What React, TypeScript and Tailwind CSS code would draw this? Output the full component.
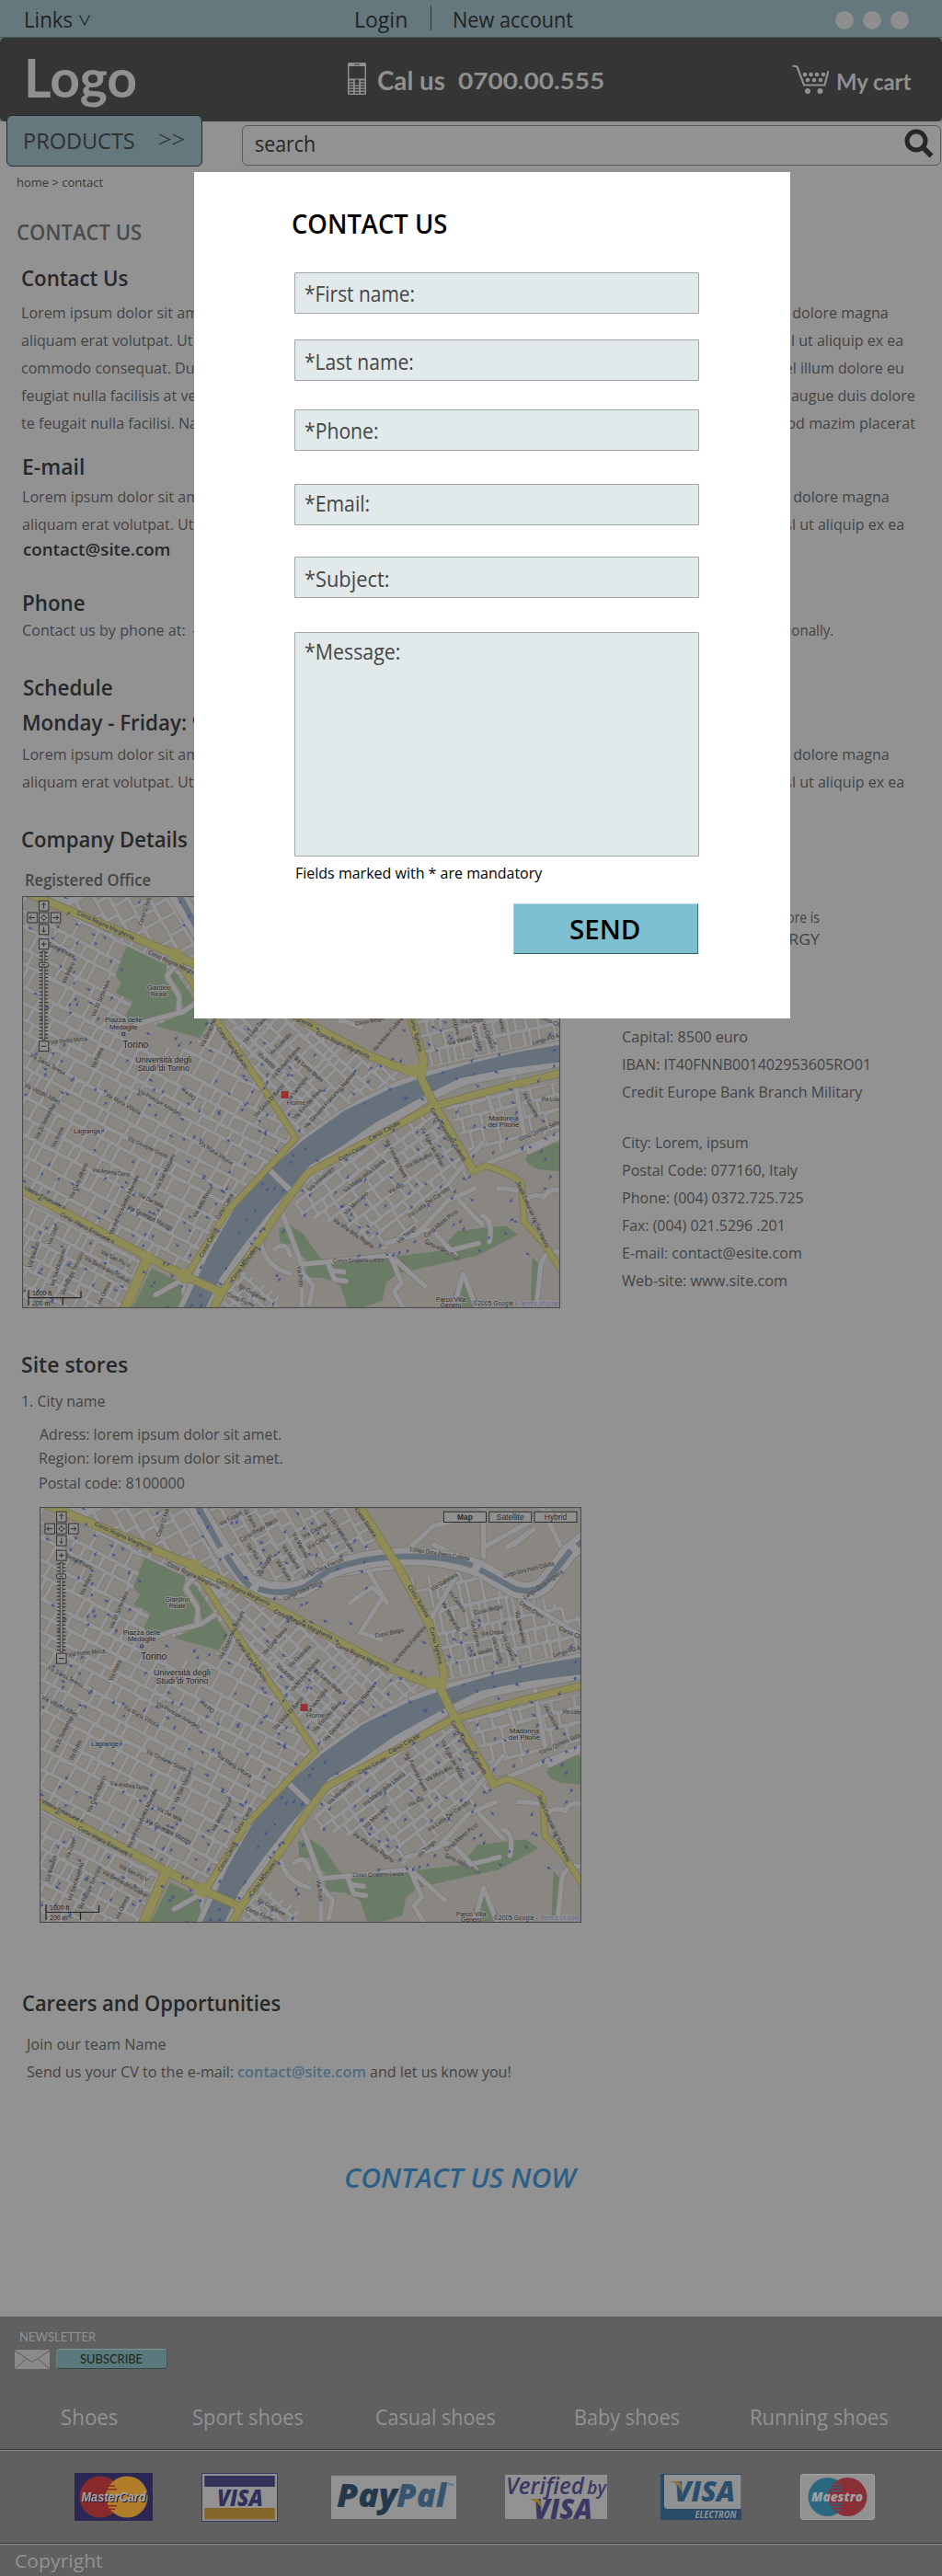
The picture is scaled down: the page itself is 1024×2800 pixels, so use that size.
import { useLayoutEffect, useRef, useState } from "react";
import type { ReactNode } from "react";

/* One line of text, condensed or widened to an exact width. */
function Fit({ w, className = "", children }: { w: number; className?: string; children: ReactNode }) {
  const ref = useRef<HTMLSpanElement>(null);
  const [k, setK] = useState(1);
  useLayoutEffect(() => {
    if (ref.current) setK(w / ref.current.offsetWidth);
  }, [w]);
  return (
    <div className={"overflow-visible whitespace-nowrap " + className} style={{ width: w }}>
      <span ref={ref} className="inline-block origin-left whitespace-pre" style={{ transform: `translate(1px, 1px) scaleX(${k})` }}>
        {children}
      </span>
    </div>
  );
}

const H = "text-[23px] leading-[30px] font-semibold text-[#282828]";
const P = "text-[16.8px] leading-[30px] text-[#434343]";
const LOREM1 =
  "Lorem ipsum dolor sit amet, consectetuer adipiscing elit, sed diam nonummy nibh euismod tincidunt ut laoreet dolore magna";
const LOREM2 =
  "aliquam erat volutpat. Ut wisi enim ad minim veniam, quis nostrud exerci tation ullamcorper suscipit lobortis nisl ut aliquip ex ea";

/* ---------- Map ---------- */

const X = (x: number) => (x - 103) / 2.376;
const Y = (y: number) => (y - 58) / 3;

function rng(seed: number) {
  let s = seed;
  return () => {
    s = (s * 16807) % 2147483647;
    return s / 2147483647;
  };
}

type Region = { id: string; poly: string; angle: number; cx: number; cy: number; w: number; h: number; cw: number; ch: number };

const pts = (list: number[][]) => list.map(([x, y]) => `${X(x).toFixed(1)},${Y(y).toFixed(1)}`).join(" ");

const regions: Region[] = [
  { id: "w", poly: pts([[103, 58], [150, 58], [500, 250], [820, 850], [520, 1310], [103, 1050]]), angle: 28, cx: 140, cy: 210, w: 440, h: 420, cw: 19, ch: 17 },
  { id: "c", poly: pts([[520, 280], [1130, 640], [1140, 680], [1000, 730], [830, 850]]), angle: 44, cx: 310, cy: 190, w: 300, h: 260, cw: 15, ch: 13 },
  { id: "n", poly: pts([[170, 58], [920, 58], [1010, 215], [860, 230], [720, 320], [690, 370], [500, 240]]), angle: 61, cx: 220, cy: 50, w: 240, h: 330, cw: 20, ch: 16 },
  { id: "e", poly: pts([[1050, 290], [1230, 270], [1330, 345], [1400, 355], [1503, 420], [1503, 530], [1160, 620], [1110, 430]]), angle: -12, cx: 520, cy: 125, w: 220, h: 180, cw: 14, ch: 20 },
  { id: "s", poly: pts([[103, 1060], [420, 1260], [370, 1413], [103, 1413]]), angle: 28, cx: 60, cy: 395, w: 200, h: 190, cw: 17, ch: 14 },
  { id: "f", poly: pts([[850, 975], [1170, 760], [1270, 970], [1220, 1030], [1050, 1225], [900, 1130], [800, 1100]]), angle: -37, cx: 400, cy: 330, w: 260, h: 200, cw: 20, ch: 15 },
  { id: "g", poly: pts([[1200, 740], [1503, 670], [1503, 830], [1380, 870], [1290, 950]]), angle: -14, cx: 530, cy: 250, w: 190, h: 130, cw: 26, ch: 20 },
  { id: "h", poly: pts([[650, 1270], [770, 1370], [770, 1413], [625, 1413]]), angle: 42, cx: 250, cy: 430, w: 110, h: 90, cw: 13, ch: 11 },
];

function Blocks({ r, seed }: { r: Region; seed: number }) {
  const rand = rng(seed * 7919 + 11);
  const out: ReactNode[] = [];
  let y = -r.h / 2;
  let n = 0;
  while (y < r.h / 2) {
    const bh = r.ch * (0.7 + rand() * 0.65);
    let x = -r.w / 2 + rand() * 6;
    while (x < r.w / 2) {
      const bw = Math.max(r.cw * (0.45 + rand() * 0.95), 6.5);
      const cut = rand() * 1.6;
      out.push(
        <path key={n++} d={`M${x.toFixed(1)} ${(y + cut).toFixed(1)}L${(x + bw - 4.2).toFixed(1)} ${y.toFixed(1)}V${(y + bh - 4.2).toFixed(1)}L${x.toFixed(1)} ${(y + bh - 4.2).toFixed(1)}Z`} />,
      );
      x += bw;
    }
    y += bh;
  }
  return (
    <g transform={`translate(${r.cx} ${r.cy}) rotate(${r.angle})`} fill="#8a8782" stroke="#79756e" strokeWidth="0.6">
      {out}
    </g>
  );
}

const roads: [string, number][] = [
  ["M120 50L180 82L500 250L700 378L1000 580L1110 635L1145 635", 8],
  ["M925 50L1030 255L1110 440L1148 600L1140 655L1175 745L1280 970", 8],
  ["M500 255L600 450L720 670L815 855L640 1090L610 1150L530 1310", 6],
  ["M95 1020L430 1245L530 1310L622 1362L598 1420", 8],
  ["M430 1245L370 1420", 10],
  ["M612 1380L700 1230L790 1060L845 970L1170 750L1330 695L1510 638", 7],
  ["M1275 965L1310 945Q1390 980 1402 1005L1408 1130L1460 1200L1510 1300", 6],
];

const greens = [
  "M375 222L480 285L472 330L505 390L500 440L430 462L390 492L372 450L390 405L345 375L362 345L345 320Z",
  "M492 290L552 400L522 430L516 370L490 330Z",
  "M450 485L560 420L590 475L565 525Z",
  "M1413 920Q1430 870 1475 868L1510 872V965L1450 958Q1415 945 1413 920Z",
  "M770 1150L800 1140L835 1170L880 1250L940 1262L1060 1245L1190 1225L1235 1160L1360 1142L1392 1172L1290 1240L1080 1300L1050 1330L1040 1390L985 1413H950L930 1340L890 1315L838 1312L845 1260L800 1200L775 1210Z",
  "M440 1283L520 1330L530 1413H390Z",
  "M1250 1300L1300 1413H1208Z",
  "M1430 1245L1455 1280L1432 1413H1425Z",
];

const minor = [
  "M950 262L1000 370M1120 180L1250 262M1250 58V220M1060 190L1120 120L1260 75M1190 260L1110 430M1400 60L1470 240M1330 345L1503 480M1250 190L1420 70M1310 190L1380 130L1330 180",
  "M395 485L440 465L520 440L555 410M500 290L480 320L512 390L510 440",
  "M780 1100L830 1270L1060 1240L1150 1340M830 1270V1413M720 1120Q710 1270 800 1300M760 1220Q790 1190 800 1240M1050 1200L1130 1170L1210 1060L1280 1020M1130 1170Q1150 1140 1180 1170L1230 1240M1300 1110Q1330 1120 1318 1195M1240 1060L1300 1140M1340 1020Q1420 1020 1410 1060Q1440 1030 1460 1050Q1480 1010 1503 1030M900 1270L915 1320L945 1325M910 1290L940 1295M1060 1240L1090 1330L1070 1360L1095 1413M1250 1300L1225 1413M1250 1300L1285 1413M1503 1230Q1450 1220 1450 1300L1440 1413M1210 1225L1260 1210L1290 1200",
  "M940 470L985 490M905 370L960 320L990 350L930 470M860 280L1040 250M750 965L800 1025M450 1370L520 1320L530 1413M820 1280L860 1340L850 1400",
  "M1290 950L1503 840M1380 640L1410 850M1200 1020L1300 870M1420 900L1503 850M1310 700L1340 820",
];

type Lbl = [string, number, number, number, number];
const labels: Lbl[] = [
  ["Corso Regina Margherita", 245, 115, 393, 200],
  ["Corso Regina Margherita", 432, 245, 568, 325],
  ["Corso Regina Margherita", 560, 298, 696, 377],
  ["Corso Regina Margherita", 708, 400, 858, 488],
  ["Corso Regina Margherita", 868, 510, 1005, 590],
  ["Corso San Maurizio", 610, 492, 685, 627],
  ["Corso Novara", 918, 65, 968, 155],
  ["Corso Tortona", 1055, 315, 1103, 418],
  ["Corso Tortona", 1112, 452, 1137, 570],
  ["Corso Giuseppe Gabetti", 1165, 758, 1252, 930],
  ["Strada Comunale Val San Martino", 1390, 1000, 1466, 1215],
  ["Vittorio Emanuele II", 108, 1020, 214, 1088],
  ["Corso Vittorio Emanuele II", 202, 1107, 340, 1200],
  ["Corso Cairoli", 570, 1247, 610, 1152],
  ["Corso Cairoli", 612, 1122, 652, 1040],
  ["Corso Moncalieri", 650, 1325, 715, 1212],
  ["Corso Casale", 1006, 862, 1086, 805],
  ["Corso Casale", 928, 928, 998, 880],
  ["Via Giulia Di Barolo", 710, 785, 785, 680],
  ["Via Vanchiglia", 795, 735, 845, 655],
  ["Via Eusebio Bava", 812, 792, 882, 695],
  ["Via Giovanni Francesco Napione", 840, 822, 970, 640],
  ["Via Michele Buniva", 755, 660, 825, 557],
  ["Via Guastalla", 750, 580, 803, 513],
  ["Via Luigi Tarino", 682, 540, 742, 455],
  ["Via Artisti", 715, 577, 758, 625],
  ["Via Santa Giulia", 810, 590, 882, 668],
  ["Via Gioacchino Rossini", 572, 555, 630, 400],
  ["Via Antonio Fontanesi", 1018, 570, 1100, 450],
  ["Corso Belgio", 970, 482, 1045, 462],
  ["Corso Belgio", 1226, 407, 1300, 385],
  ["Via Oropa", 1243, 475, 1302, 468],
  ["Via Varallo", 1212, 546, 1273, 525],
  ["Via Andorno", 1218, 428, 1234, 515],
  ["Via Lessolo", 1272, 482, 1294, 568],
  ["Via Cigliano", 1300, 475, 1324, 560],
  ["Via Benevento", 1333, 398, 1352, 505],
  ["Via Mongrando", 1143, 370, 1185, 465],
  ["Via Cosseria", 1160, 335, 1200, 402],
  ["Via Gattinara", 1116, 330, 1183, 280],
  ["Corso Chieri", 1342, 372, 1402, 420],
  ["Corso Ch", 1444, 455, 1500, 486],
  ["Lungo PO A", 1430, 545, 1500, 520],
  ["Lungo Dora Pietro Colletta", 1060, 198, 1213, 230],
  ["Lungo Dora Pietro Colletta", 1303, 285, 1432, 245],
  ["Lungo Dora Voghera", 1355, 357, 1455, 270],
  ["Lungo Dora Firenze", 782, 290, 888, 230],
  ["Lungo Dora Siena", 735, 360, 835, 305],
  ["Corso 11 Feb", 412, 155, 436, 64],
  ["Corso Regio Parco", 622, 170, 718, 100],
  ["Via Foggia", 570, 118, 625, 78],
  ["Via Parma", 630, 66, 658, 125],
  ["Via Pisa", 638, 180, 665, 230],
  ["Via Reggio", 672, 287, 702, 215],
  ["Via Modena", 730, 185, 770, 260],
  ["Via Mantova", 757, 145, 792, 225],
  ["Via Cagliari", 798, 195, 855, 150],
  ["Via Catania", 785, 158, 845, 115],
  ["Via Parma", 715, 235, 748, 300],
  ["Corso Michele Buscalioni", 838, 66, 910, 205],
  ["Via Milano", 213, 345, 238, 278],
  ["Via 20 Settembre", 290, 455, 330, 335],
  ["Santa Chiara", 170, 218, 237, 260],
  ["Via Pietro Micca", 177, 543, 272, 530],
  ["Via Roma", 288, 625, 313, 560],
  ["Via Santa Teresa", 123, 582, 214, 645],
  ["Via Vittorio Alfieri", 108, 680, 200, 740],
  ["Via Maria Vittoria", 320, 712, 410, 775],
  ["Via Principe Amedeo", 404, 700, 515, 780],
  ["Via PO", 518, 692, 550, 730],
  ["Via 20 Settembre", 142, 858, 188, 742],
  ["Via Roma", 186, 885, 210, 820],
  ["Via Giovanni Giolitti", 378, 857, 480, 920],
  ["Via Maria Vittoria", 562, 870, 648, 940],
  ["Via Andrea Doria", 285, 962, 383, 978],
  ["Via Carlo Alberto", 232, 1055, 273, 937],
  ["Via San Massimo", 455, 1025, 500, 908],
  ["Via dell'Accademia Albertina", 335, 1172, 405, 980],
  ["Via Dei Mille", 405, 1042, 470, 1085],
  ["Via Giuseppe Mazzini", 378, 1082, 492, 1155],
  ["Via della Rocca", 553, 1115, 597, 1015],
  ["Via San Pio V", 308, 1230, 382, 1278],
  ["Via Bernardino Galliari", 265, 1250, 382, 1330],
  ["Via Saluzzo", 125, 1280, 146, 1195],
  ["Via Goito", 175, 1205, 195, 1145],
  ["Via Sant'Anselmo", 183, 1342, 215, 1220],
  ["Via Principe Tommaso", 210, 1370, 262, 1230],
  ["Via Ormea", 304, 1402, 332, 1330],
  ["Via Curtatone", 665, 1340, 735, 1390],
  ["Corso Fiume", 635, 1370, 705, 1408],
  ["Corso Giovanni Lanza", 912, 1262, 1043, 1258],
  ["Via Villa della Regina", 912, 1125, 1015, 1215],
  ["Via Monferrato", 850, 1028, 914, 955],
  ["Via Martiri della Libertà", 942, 1032, 1047, 930],
  ["Via Moncalvo", 944, 1105, 1002, 1035],
  ["Via Moncalvo", 1102, 952, 1170, 908],
  ["Via Asti", 1057, 1035, 1096, 1010],
  ["Via Ferrante Aporti", 1048, 860, 1098, 985],
  ["Via Figlie dei Militari", 1140, 820, 1195, 948],
  ["Via Luisa Del Carretto", 1108, 1115, 1215, 1020],
  ["Via Tongo", 1082, 1200, 1126, 1150],
  ["Corso Alberto Picco", 1152, 1180, 1235, 1095],
  ["Corso Alberto Picco", 1150, 1195, 1240, 1255],
  ["Via Prato", 820, 1275, 828, 1345],
  ["Via Gassino", 1406, 705, 1440, 785],
  ["Via Lom", 1453, 727, 1500, 732],
  ["Corso Quintino Sella", 1396, 862, 1500, 805],
];

function NavBox({ x, y, d }: { x: number; y: number; d: string }) {
  return (
    <g transform={`translate(${X(x)} ${Y(y)})`}>
      <rect x="-5" y="-5.5" width="10.5" height="11" fill="#8f8f8f" stroke="#333" strokeWidth="1" />
      <path d={d} fill="none" stroke="#2c2c2c" strokeWidth="1" />
    </g>
  );
}

function CityMap({ className, id }: { className: string; id: string }) {
  const rand = rng(4711);
  const arrows = Array.from({ length: 500 }, () => {
    const x = rand() * 589;
    const y = rand() * 452;
    return { x, y, a: [28, 118, 208, 298, -46, 44][Math.floor(rand() * 6)], keep: y < 400 || x < 290 };
  }).filter((a) => a.keep && !(a.x > 360 && a.y < 120) && !(a.x > 112 && a.x < 200 && a.y > 60 && a.y < 150));
  const sq = { transform: "scale(.42088 .33333) translate(-103 -58)" };
  return (
    <svg viewBox="0 0 589 452" preserveAspectRatio="none" className={className}>
      <defs>
        {regions.map((r) => (
          <clipPath key={r.id} id={`${id}-${r.id}`}>
            <polygon points={r.poly} />
          </clipPath>
        ))}
      </defs>
      <rect width="589" height="452" fill="#8a8782" />
      <g {...sq}>
        {greens.map((d) => (
          <path key={d} d={d} fill="#6b7c66" />
        ))}
      </g>
      {regions.map((r, i) => (
        <g key={r.id} clipPath={`url(#${id}-${r.id})`}>
          <rect width="589" height="452" fill="#939395" />
          <Blocks r={r} seed={i + 1} />
        </g>
      ))}
      <g {...sq}>
        <path d="M395 490L440 470L450 485L565 525L540 560L400 555L370 510Z" fill="#8a8782" />
        {greens.slice(0, 3).map((d) => (
          <path key={d} d={d} fill="#6b7c66" />
        ))}
      </g>
      <g {...sq} fill="none" strokeLinejoin="round" strokeLinecap="round">
        {minor.map((d) => (
          <path key={d} d={d} stroke="#7b776f" strokeWidth="6.4" vectorEffect="non-scaling-stroke" />
        ))}
        {minor.map((d) => (
          <path key={"f" + d} d={d} stroke="#939395" strokeWidth="5.2" vectorEffect="non-scaling-stroke" />
        ))}
        <path d="M500 40L575 195L640 300Q700 345 780 325L850 265Q940 222 1030 220Q1150 215 1245 262L1330 325Q1380 345 1410 305L1470 205L1515 160" stroke="#7b776f" strokeWidth="20" vectorEffect="non-scaling-stroke" />
        <path d="M500 40L575 195L640 300Q700 345 780 325L850 265Q940 222 1030 220Q1150 215 1245 262L1330 325Q1380 345 1410 305L1470 205L1515 160" stroke="#939395" strokeWidth="18.5" vectorEffect="non-scaling-stroke" />
        <path d="M505 40L570 190M585 215Q620 290 648 318M668 325Q730 350 790 318L850 265Q940 222 1030 220Q1150 215 1222 250M1240 262L1330 325Q1380 345 1410 305L1475 200M1492 185L1515 160" stroke="#67717b" strokeWidth="6.5" strokeLinecap="butt" vectorEffect="non-scaling-stroke" />
        <path d="M1510 530Q1290 590 1130 640Q1000 700 890 795L800 880L720 970L640 1090L570 1240L505 1420L600 1420L640 1310L700 1210L770 1090L860 965L1010 855L1160 735L1260 680L1510 618Z" fill="#939395" stroke="#7b776f" strokeWidth="0.8" vectorEffect="non-scaling-stroke" />
      </g>
      <g {...sq}>
        <path d="M1510 545L1390 572L1270 608L1160 648L1060 692L940 765L830 865L745 960L660 1075L590 1230L520 1420H578L620 1310L680 1205L742 1105L802 1020L850 945L930 885L1020 805L1150 715L1240 658L1370 625L1510 603Z" fill="#67717b" />
      </g>
      <g {...sq} fill="none">
        <path d="M748 962L800 1025" stroke="#939395" strokeWidth="6" vectorEffect="non-scaling-stroke" />
        {roads.map(([d, w]) => (
          <path key={d} d={d} stroke="#77745a" strokeWidth={w + 1.6} strokeLinejoin="round" vectorEffect="non-scaling-stroke" />
        ))}
        {roads.map(([d, w]) => (
          <path key={"y" + d} d={d} stroke="#8f8c55" strokeWidth={w} strokeLinejoin="round" vectorEffect="non-scaling-stroke" />
        ))}
      </g>
      <g fill="#8f8c55">
        <circle cx={X(503)} cy={Y(252)} r="8" />
        <circle cx={X(525)} cy={Y(1308)} r="8" />
        <circle cx={X(430)} cy={Y(1245)} r="6" />
        <circle cx={X(633)} cy={Y(1095)} r="6" />
        <ellipse cx={X(1125)} cy={Y(632)} rx="13" ry="7" />
      </g>
      <g stroke="#4a568a" fill="#4a568a" strokeWidth="0.9">
        {arrows.map((a, i) => (
          <path key={i} transform={`translate(${a.x.toFixed(1)} ${a.y.toFixed(1)}) rotate(${a.a})`} d="M-3 0H0M0 -1.2L2 0L0 1.2Z" />
        ))}
      </g>
      <g fontFamily="Liberation Sans" fontSize="6.6" fill="#2c2c2c" stroke="#93929188" strokeWidth="1" paintOrder="stroke">
        {labels.map(([t, x1, y1, x2, y2], i) => {
          const ax = X(x1), ay = Y(y1), bx = X(x2), by = Y(y2);
          const len = Math.hypot(bx - ax, by - ay);
          const ang = (Math.atan2(by - ay, bx - ax) * 180) / Math.PI;
          return (
            <text key={i} transform={`translate(${ax} ${ay}) rotate(${ang})`} y="1" textLength={len} lengthAdjust="spacingAndGlyphs">
              {t}
            </text>
          );
        })}
      </g>
      <g fontFamily="Liberation Sans" fill="#262626" stroke="#939292" strokeWidth="2" paintOrder="stroke" textAnchor="middle">
        <text x={X(459)} y={Y(368)} fontSize="7">Giardino</text>
        <text x={X(459)} y={Y(388)} fontSize="7">Reale</text>
        <text x={X(367)} y={Y(474)} fontSize="7.6">Piazza delle</text>
        <text x={X(367)} y={Y(496)} fontSize="7.6">Medaglie</text>
        <text x={X(398)} y={Y(556)} fontSize="10.4">Torino</text>
        <text x={X(471)} y={Y(607)} fontSize="9">Università degli</text>
        <text x={X(471)} y={Y(634)} fontSize="9">Studi di Torino</text>
        <text x={X(272)} y={Y(838)} fontSize="7">Lagrange</text>
        <text x={X(816)} y={Y(744)} fontSize="8" fill="#3a3a3a">Home</text>
        <text x={X(1355)} y={Y(797)} fontSize="7.8">Madonna</text>
        <text x={X(1355)} y={Y(818)} fontSize="7.8">del Pilone</text>
        <text x={X(1218)} y={Y(1392)} fontSize="6.8">Parco Villa</text>
        <text x={X(1218)} y={Y(1410)} fontSize="6.8">Genero</text>
        <text x={X(1333)} y={Y(1404)} fontSize="7" textLength="48">©2005 Google -</text>
        <text x={X(1446)} y={Y(1404)} fontSize="7" fill="#5f6193" textDecoration="underline" textLength="42">Terms of Use</text>
      </g>
      <circle cx={X(367)} cy={Y(512)} r="1.6" fill="#8f8f95" stroke="#2f3a78" strokeWidth="1.2" />
      <rect x={X(786) - 3.5} y={Y(712) - 3.5} width="7" height="7" fill="#a72e2e" stroke="#7d2222" strokeWidth="0.6" />
      <NavBox x={159} y={90} d="M0.2 3V-3M-2 -0.8L0.2 -3L2.4 -0.8" />
      <NavBox x={129} y={129} d="M3 0H-3M-0.8 -2.4L-3 0L-0.8 2.4" />
      <NavBox x={159} y={129} d="M0.2 -3.2L1.4 -2H-1ZM0.2 3.2L1.4 2H-1ZM-3 0L-2 1V-1ZM3.4 0L2.4 1V-1Z" />
      <NavBox x={190} y={129} d="M-3 0H3M0.8 -2.4L3 0L0.8 2.4" />
      <NavBox x={159} y={168} d="M0.2 -3V3M-2 0.8L0.2 3L2.4 0.8" />
      <NavBox x={159} y={216} d="M0.2 -2.6V2.6M-2.6 0H3" />
      {Array.from({ length: 25 }, (_, i) => (
        <path key={i} d={`M18.8 ${62 + i * 3.9}h9.6`} stroke="#333" strokeWidth="1.2" />
      ))}
      <rect x="22.2" y="60.5" width="2.8" height="97" fill="#949494" stroke="#333" strokeWidth="0.8" />
      <rect x="18.6" y="73" width="10" height="4.6" rx="1" fill="#949494" stroke="#333" />
      <path d="M21.5 75.3h4" stroke="#333" />
      <NavBox x={159} y={552} d="M-2.6 0H3" />
      <g fontFamily="Liberation Sans" fontSize="8.4" textAnchor="middle" fill="#2c2c2c">
        {[[1146, "Map"], [1263, "Satellite"], [1380, "Hybrid"]].map(([x, t], i) => (
          <g key={i}>
            <rect x={X(x as number) + 0.5} y="5.3" width="46" height="11.2" fill="#919191" stroke="#2f2f2f" strokeWidth="1" />
            <text x={X(x as number) + 23.5} y="13.8" fontWeight={i ? 400 : 700}>{t}</text>
          </g>
        ))}
      </g>
      <path d="M7 432V449M7 440.5H64.5V433M44.5 441V449M7 440.5H44" fill="none" stroke="#222" strokeWidth="1.2" />
      <g fontFamily="Liberation Sans" fontSize="7" fill="#222">
        <text x="11" y="438">1000 ft</text>
        <text x="11" y="448.5">200 m</text>
      </g>
      <rect x="0.5" y="0.5" width="588" height="451" fill="none" stroke="#4c4c4c" strokeWidth="1.2" />
    </svg>
  );
}

/* ---------- Payment cards ---------- */

function MasterCard() {
  return (
    <svg viewBox="0 0 85 52" className="w-[85px] h-[52px]">
      <rect width="85" height="52" fill="#2a2755" />
      <circle cx="28" cy="26" r="22.6" fill="#882a2c" />
      <circle cx="57" cy="26" r="22.6" fill="#b07d2a" />
      <path d="M40 12.5H45M37.5 16H47.5M36 19.5H49M36 34H49M37 37.5H48M40 41H45" stroke="#b07d2a" strokeWidth="1.7" />
      <path d="M37 14.3H44M35.5 17.8H46M35.5 35.8H46M37 39.3H44" stroke="#882a2c" strokeWidth="1.6" />
      <g fontFamily="Liberation Sans" fontSize="14.5" fontWeight="700" fontStyle="italic">
        <text aria-hidden x="8.5" y="32" fill="#22203f" textLength="70" lengthAdjust="spacingAndGlyphs">MasterCard</text>
        <text x="7.5" y="31" fill="#a3a3a3" textLength="70" lengthAdjust="spacingAndGlyphs">MasterCard</text>
      </g>
    </svg>
  );
}

function Visa() {
  return (
    <svg viewBox="0 0 83 53" className="w-[83px] h-[53px]">
      <rect x="0.5" y="0.5" width="82" height="52" fill="#929292" stroke="#3b3968" />
      <rect x="3.3" y="3" width="76.5" height="12" fill="#343259" />
      <rect x="3.3" y="38" width="76.5" height="12.5" fill="#85662a" />
      <text x="17" y="35.5" fontFamily="Open Sans" fontSize="24" fontWeight="800" fontStyle="italic" fill="#302e5b" textLength="50" lengthAdjust="spacingAndGlyphs">VISA</text>
    </svg>
  );
}

function PayPal() {
  return (
    <svg viewBox="0 0 136 47" className="w-[136px] h-[47px]">
      <rect width="136" height="47" fill="#929292" />
      <g fontFamily="Open Sans" fontWeight="800" fontStyle="italic" fontSize="34.5">
        <text x="6" y="33.5" fill="#26394c" textLength="66" lengthAdjust="spacingAndGlyphs">Pay</text>
        <text x="71" y="33.5" fill="#37556f" textLength="54" lengthAdjust="spacingAndGlyphs">Pal</text>
      </g>
      <text x="126" y="13" fontFamily="Liberation Sans" fontSize="7" fill="#37556f">™</text>
    </svg>
  );
}

function Verified() {
  return (
    <svg viewBox="0 0 111 48" className="w-[111px] h-[48px]">
      <rect width="111" height="48" fill="#929292" />
      <g fontFamily="Open Sans" fontStyle="italic" fill="#3b3864">
        <text x="1" y="20.5" fontSize="26" fontWeight="600" textLength="85" lengthAdjust="spacingAndGlyphs">Verified</text>
        <text x="89" y="20.5" fontSize="20" fontWeight="600" textLength="21" lengthAdjust="spacingAndGlyphs">by</text>
        <text x="31" y="47.5" fontSize="30" fontWeight="800" textLength="64" lengthAdjust="spacingAndGlyphs">VISA</text>
      </g>
      <path d="M25 26H36Q39 28 40 36Q34 28 25 26Z" fill="#8c7430" />
    </svg>
  );
}

function Electron() {
  return (
    <svg viewBox="0 0 88 50" className="w-[88px] h-[50px]">
      <rect width="88" height="50" fill="#294a68" />
      <path d="M4 1H87.5V38H8Q4 38 4 34Z" fill="#909192" />
      <text x="15" y="30" fontFamily="Open Sans" fontSize="30" fontWeight="800" fontStyle="italic" fill="#294f6e" textLength="66" lengthAdjust="spacingAndGlyphs">VISA</text>
      <path d="M10 8H20Q23 10 23 19Q19 10 10 8Z" fill="#93713a" />
      <text x="37.5" y="47.5" fontFamily="Open Sans" fontSize="10" fontWeight="700" fontStyle="italic" fill="#939393" textLength="45" lengthAdjust="spacingAndGlyphs">ELECTRON</text>
    </svg>
  );
}

function Maestro() {
  return (
    <svg viewBox="0 0 81 50" className="w-[81px] h-[50px]">
      <rect x="0.5" y="0.5" width="80" height="49" rx="2.5" fill="#929293" stroke="#a4a4a4" />
      <circle cx="29.5" cy="25" r="21" fill="#2a6880" />
      <circle cx="51.5" cy="25" r="21" fill="#8a2f38" />
      <path d="M37 11.5H43M34 15H46M33 18.5H46M33 32.5H46M34 36H45M37 39.5H43" stroke="#2a6880" strokeWidth="1.6" />
      <text x="12" y="30" fontFamily="Open Sans" fontSize="14.5" fontWeight="800" fontStyle="italic" fill="#a0a0a0" textLength="56" lengthAdjust="spacingAndGlyphs">Maestro</text>
    </svg>
  );
}

/* ---------- Modal ---------- */

function Field({ label, w, className, pad }: { label: string; w: number; className: string; pad: string }) {
  return (
    <div className={"w-[440px] rounded-[1px] border border-[#a1a5a8] bg-[#e1e9eb] pl-[9px] " + className}>
      <Fit w={w} className={"text-[23px] leading-[30px] text-[#464646] " + pad}>{label}</Fit>
    </div>
  );
}

function ContactModal() {
  return (
    <div className="absolute left-[211px] top-[187px] flex h-[920px] w-[648px] flex-col items-start bg-white pl-[109px]">
      <Fit w={169} className="-ml-[4px] mt-[35px] text-[29.5px] leading-[40px] font-semibold text-black">CONTACT US</Fit>
      <Field label="*First name:" w={120} className="mt-[34px] h-[45px]" pad="pt-[6px]" />
      <Field label="*Last name:" w={119} className="mt-[28px] h-[45px]" pad="pt-[7px]" />
      <Field label="*Phone:" w={81} className="mt-[31px] h-[45px]" pad="pt-[6px]" />
      <Field label="*Email:" w={71} className="mt-[36px] h-[45px]" pad="pt-[4px]" />
      <Field label="*Subject:" w={92} className="mt-[34px] h-[45px]" pad="pt-[7px]" />
      <Field label="*Message:" w={104} className="mt-[37px] h-[244px]" pad="pt-[4px]" />
      <Fit w={268} className="mt-[2px] text-[16.8px] leading-[30px] text-black">Fields marked with * are mandatory</Fit>
      <div className="ml-[238px] mt-[19px] flex h-[55px] w-[201px] justify-center border border-b-[#2f5a66] border-l-[#a0d0dc] border-r-[#3c7080] border-t-[#a6d6e2] bg-[#7ec0d1] pr-1">
        <Fit w={77} className="mt-[6px] text-[29.5px] leading-[40px] font-semibold text-black">SEND</Fit>
      </div>
    </div>
  );
}

/* ---------- Header ---------- */

function PhoneIcon() {
  return (
    <svg viewBox="0 0 20 35" className="h-[35px] w-5">
      <rect width="20" height="35" rx="1.5" fill="#909090" />
      <rect x="7" y="1.2" width="6" height="1.5" fill="#555" />
      <rect x="1.5" y="4" width="17" height="13.5" fill="#353535" />
      {[0, 1, 2, 3, 4].map((r) =>
        [1.5, 7.8, 14].map((x) => <rect key={`${r}-${x}`} x={x} y={19.5 + r * 3.1} width="4.5" height="1.7" fill="#353535" />),
      )}
      <circle cx="10" cy="20.5" r="2.3" fill="#353535" />
    </svg>
  );
}

function CartIcon() {
  return (
    <svg viewBox="0 0 40 32" className="h-8 w-10">
      <path d="M0.5 1.5L5.5 2.5L13 22.5H35.5L39.5 7" fill="none" stroke="#909090" strokeWidth="2.2" />
      <g fill="#909090">
        {[14, 20.5, 27, 34].map((x) => <circle key={x} cx={x} cy="11" r="2.3" />)}
        {[17, 24, 31].map((x) => <circle key={x} cx={x} cy="17" r="2.3" />)}
        <circle cx="17" cy="29" r="3" />
        <circle cx="30.5" cy="29" r="3" />
      </g>
    </svg>
  );
}

function Header() {
  return (
    <header className="bg-[#64787d]">
      <div className="flex h-[41px] items-start border-b border-[#4a5c60] pl-[25px] pt-[5px] text-[23px] leading-[30px] text-[#232323]">
        <Fit w={53}>Links</Fit>
        <svg viewBox="0 0 14 12" className="ml-[7px] mt-[11px] h-3 w-3.5"><path d="M1.5 0.5L7 11L12.5 0.5" fill="none" stroke="#282828" strokeWidth="1.3" /></svg>
        <Fit w={58} className="ml-[285px]">Login</Fit>
        <div className="ml-[26px] mt-[1px] h-[27px] w-px bg-[#303a3c]" />
        <Fit w={131} className="ml-[22px]">New account</Fit>
        <div className="ml-[286px] mt-[7px] flex gap-[10px]">
          {[0, 1, 2].map((i) => <div key={i} className="size-5 rounded-full bg-[#8f8f8f]" />)}
        </div>
      </div>
      <div className="flex h-[91px] items-start rounded-[5px] bg-[#353535] text-[#909090]">
        <Fit w={123} className="ml-[25px] mt-[7px] font-[Lato] text-[57px] leading-[70px] font-bold">Logo</Fit>
        <div className="ml-[230px] mt-[27px]"><PhoneIcon /></div>
        <Fit w={74} className="ml-[11px] mt-[25px] font-[Lato] text-[28.5px] leading-[40px] font-bold">Cal us</Fit>
        <Fit w={159} className="ml-[14px] mt-[26px] font-[Lato] text-[25.5px] leading-[38px] font-bold">0700.00.555</Fit>
        <div className="ml-[205px] mt-[29px]"><CartIcon /></div>
        <Fit w={81} className="ml-[7px] mt-[27px] font-[Lato] text-[25px] leading-[38px] font-bold">My cart</Fit>
      </div>
    </header>
  );
}

function Toolbar() {
  return (
    <div className="flex h-[49px] items-start">
      <div className="relative -mt-[7px] ml-[7px] flex h-[56px] w-[213px] rounded-[6px] border border-[#262c2e] bg-[#64787d] pl-[16px] pt-[10px] text-[#303030]">
        <Fit w={122} className="text-[23.5px] leading-[32px] font-medium">PRODUCTS</Fit>
        <svg viewBox="0 0 28 13" className="ml-[26px] mt-[9px] h-[13px] w-7"><path d="M1 1L12.5 6.5L1 12M15.5 1L27 6.5L15.5 12" fill="none" stroke="#303030" strokeWidth="1.3" /></svg>
      </div>
      <div className="ml-[43px] mt-[4px] flex h-[44px] w-[760px] justify-between rounded-[6px] border border-[#5a5a5a] pl-[12px] pr-[7px]">
        <Fit w={66} className="mt-[3px] text-[23px] leading-[30px] text-[#262626]">search</Fit>
        <svg viewBox="0 0 32 32" className="mt-[3px] size-8"><circle cx="13" cy="13" r="10" fill="none" stroke="#262626" strokeWidth="5" /><path d="M20 20L29.5 29.5" stroke="#262626" strokeWidth="5.5" /></svg>
      </div>
    </div>
  );
}

/* ---------- Page ---------- */

export default function App() {
  return (
    <div className="relative h-[2800px] w-[1024px] overflow-hidden bg-[#929292] font-['Open_Sans',sans-serif]">
      <Header />
      <Toolbar />
      <main className="h-[2337px] pl-[22px]">
        <Fit w={94} className="-ml-[5px] pt-[6px] text-[13px] leading-[20px] text-[#383838]">home &gt; contact</Fit>
        <Fit w={136} className="-ml-[5px] mt-[29px] text-[23.5px] leading-[30px] font-semibold text-[#4a4a4a]">CONTACT US</Fit>

        <Fit w={116} className={"mt-[20px] " + H}>Contact Us</Fit>
        <div className="mt-[8px]">
          <Fit w={943} className={P}>{LOREM1}</Fit>
          <Fit w={959} className={P}>{LOREM2}</Fit>
          <Fit w={960} className={P}>commodo consequat. Duis autem vel eum iriure dolor in hendrerit in vulputate velit esse molestie consequat, vel illum dolore eu</Fit>
          <Fit w={972} className={P}>feugiat nulla facilisis at vero eros et accumsan et iusto odio dignissim qui blandit praesent luptatum zzril delenit augue duis dolore</Fit>
          <Fit w={972} className={P}>te feugait nulla facilisi. Nam liber tempor cum soluta nobis eleifend option congue nihil imperdiet doming id quod mazim placerat</Fit>
        </div>

        <Fit w={68} className={"ml-[1px] mt-[17px] " + H}>E-mail</Fit>
        <div className="ml-[1px] mt-[3px]">
          <Fit w={943} className={P}>{LOREM1}</Fit>
          <Fit w={959} className={P}>{LOREM2}</Fit>
        </div>
        <Fit w={160} className="ml-[2px] text-[18px] leading-[24px] font-semibold text-[#282828]">contact@site.com</Fit>

        <Fit w={69} className={"ml-[1px] mt-[31px] " + H}>Phone</Fit>
        <div className="ml-[1px] flex gap-[7px]">
          <Fit w={178} className={P}>Contact us by phone at:</Fit>
          <Fit w={697} className={P}>- 0372.725.725 or 0700.00.555, our operators answer every working day, locally and internationally.</Fit>
        </div>

        <Fit w={98} className={"ml-[2px] mt-[32px] " + H}>Schedule</Fit>
        <div className={"ml-[1px] mt-[8px] flex gap-[6px] " + H}>
          <Fit w={179}>Monday - Friday:</Fit>
          <Fit w={120}>9:00 - 18:00</Fit>
        </div>
        <div className="ml-[1px] mt-[5px]">
          <Fit w={943} className={P}>{LOREM1}</Fit>
          <Fit w={959} className={P}>{LOREM2}</Fit>
        </div>

        <Fit w={181} className={"mt-[32px] " + H}>Company Details</Fit>
        <div className="flex">
          <div className="pl-[2px] pt-[18px]">
            <Fit w={137} className="ml-[2px] text-[17.2px] leading-[24px] font-semibold text-[#454545]">Registered Office</Fit>
            <CityMap id="office" className="mt-[6px] h-[448px] w-[585px]" />
          </div>
          <div className="pl-[66px] pt-[58px]">
            <Fit w={215} className="text-[16.8px] leading-[24px] text-[#434343]">The company owning the store is</Fit>
            <Fit w={215} className="text-[16.8px] leading-[24px] text-[#434343]">SC LOREM IPSUM ENERGY</Fit>
            <Fit w={137} className={"mt-[79px] " + P}>Capital: 8500 euro</Fit>
            <Fit w={271} className={P}>IBAN: IT40FNNB001402953605RO01</Fit>
            <Fit w={261} className={P}>Credit Europe Bank Branch Military</Fit>
            <Fit w={138} className={"mt-[25px] " + P}>City: Lorem, ipsum</Fit>
            <Fit w={191} className={P}>Postal Code: 077160, Italy</Fit>
            <Fit w={198} className={P}>Phone: (004) 0372.725.725</Fit>
            <Fit w={178} className={P}>Fax: (004) 021.5296 .201</Fit>
            <Fit w={196} className={P}>E-mail: contact@esite.com</Fit>
            <Fit w={180} className={P}>Web-site: www.site.com</Fit>
          </div>
        </div>

        <Fit w={116} className={"mt-[45px] " + H}>Site stores</Fit>
        <Fit w={92} className={"mt-[10px] " + P}>1. City name</Fit>
        <div className="ml-[21px] mt-[8px] text-[16.8px] leading-[26px] text-[#434343]">
          <Fit w={263} className="-ml-px">Adress: lorem ipsum dolor sit amet.</Fit>
          <Fit w={266} className="-ml-[2px]">Region: lorem ipsum dolor sit amet.</Fit>
          <Fit w={159} className="-ml-[2px] mt-[1px]">Postal code: 8100000</Fit>
          <CityMap id="store" className="mt-[14px] h-[452px] w-[589px]" />
        </div>

        <Fit w={281} className={"ml-[1px] mt-[71px] " + H}>Careers and Opportunities</Fit>
        <div className="ml-[6px] mt-[15px]">
          <Fit w={152} className={P}>Join our team Name</Fit>
          <div className={"flex gap-[4px] " + P}>
            <Fit w={225}>Send us your CV to the e-mail:</Fit>
            <Fit w={140} className="font-semibold !text-[#4d6c80]">contact@site.com</Fit>
            <Fit w={154}>and let us know you!</Fit>
          </div>
        </div>
        <Fit w={252} className="ml-[351px] mt-[80px] text-[29.5px] leading-[40px] font-semibold italic text-[#2c5f86]">CONTACT US NOW</Fit>
      </main>

      <footer className="h-[282px] bg-[#606060] pt-[11px] text-[#929292]">
        <Fit w={83} className="ml-[20px] font-[Lato] text-[13.5px] leading-[20px]">NEWSLETTER</Fit>
        <div className="mt-[4px] flex pl-[16px]">
          <svg viewBox="0 0 38 21" className="mt-px h-[21px] w-[38px]">
            <rect width="38" height="21" fill="#8a8a8a" />
            <path d="M0 1L19 13.5L38 1M0.5 20.5L13 9.5M37.5 20.5L25 9.5" fill="none" stroke="#5e5e5e" strokeWidth="1" />
          </svg>
          <div className="ml-[7px] flex h-[22px] w-[121px] justify-center rounded-[4px] border border-b-[#33474a] border-l-[#6a8589] border-r-[#40575b] border-t-[#7b9296] bg-[#5b787c] pr-1">
            <Fit w={68} className="font-[Lato] text-[13.5px] leading-[18px] text-[#1e1e1e]">SUBSCRIBE</Fit>
          </div>
        </div>
        <nav className="mt-[36px] flex pl-[65px] text-[23px] leading-[30px]">
          <Fit w={62}>Shoes</Fit>
          <Fit w={121} className="ml-[81px]">Sport shoes</Fit>
          <Fit w={131} className="ml-[78px]">Casual shoes</Fit>
          <Fit w={115} className="ml-[85px]">Baby shoes</Fit>
          <Fit w={151} className="ml-[76px]">Running shoes</Fit>
        </nav>
        <div className="mt-[21px] h-[2px] border-b border-t border-b-[#8c8c8c] border-t-[#363636]" />
        <div className="flex h-[100px] items-center pl-[81px]">
          <MasterCard />
          <div className="ml-[53px]"><Visa /></div>
          <div className="ml-[58px]"><PayPal /></div>
          <div className="ml-[53px]"><Verified /></div>
          <div className="ml-[58px]"><Electron /></div>
          <div className="ml-[64px]"><Maestro /></div>
        </div>
        <div className="h-[2px] border-b border-t border-b-[#8c8c8c] border-t-[#363636]" />
        <Fit w={96} className="ml-[15px] text-[19.2px] leading-[34px]">Copyright</Fit>
      </footer>

      <ContactModal />
    </div>
  );
}
